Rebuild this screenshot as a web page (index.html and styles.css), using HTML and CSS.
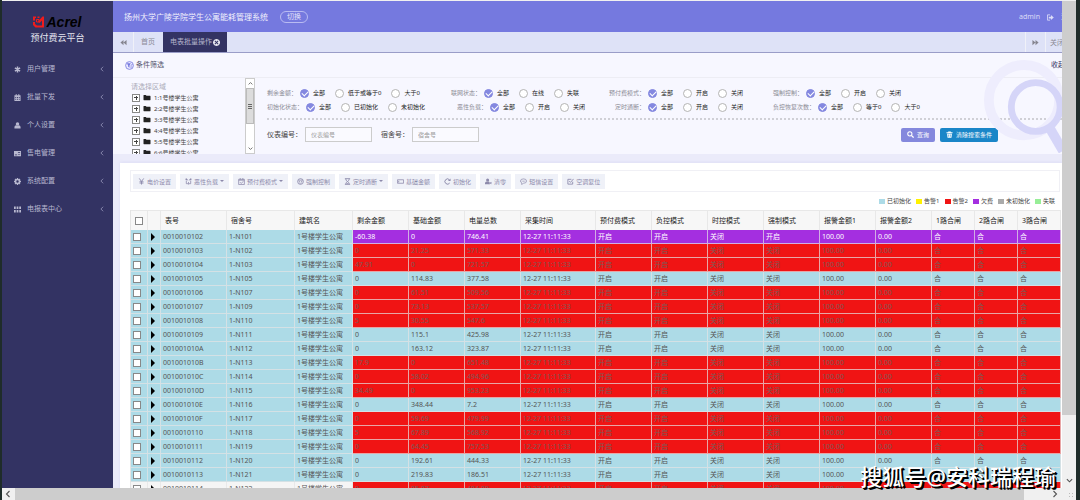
FILE: index.html
```html
<!DOCTYPE html>
<html lang="zh">
<head>
  <meta charset="UTF-8">
  <meta name="viewport" content="width=device-width, initial-scale=1.0">
  <title>预付费云平台</title>
  <link rel="stylesheet" href="styles.css">
</head>
<body>
  <!-- 图标 -->
  <svg class="sprite" aria-hidden="true">
    <symbol id="i-asterisk" viewBox="0 0 16 16"><path d="M8 1v14M2 4.5l12 7M14 4.5l-12 7" fill="none" stroke="currentColor" stroke-width="3.4"/></symbol>
    <symbol id="i-calendar" viewBox="0 0 16 16"><path d="M1 3h3V0h2v3h4V0h2v3h3v13H1zM3 7v2h2V7zm4 0v2h2V7zm4 0v2h2V7zM3 11v2h2v-2zm4 0v2h2v-2zm4 0v2h2v-2z" fill="currentColor" fill-rule="evenodd"/></symbol>
    <symbol id="i-user" viewBox="0 0 16 16"><circle cx="8" cy="4.5" r="4" fill="currentColor"/><path d="M1 15v-3c0-3 2-4 4-4.500c2 1.500 4 1.500 6 0c2 .5 4 1.500 4 4.500v3z" fill="currentColor"/></symbol>
    <symbol id="i-card" viewBox="0 0 16 16"><path d="M0 2h16v12H0zM9 5v2h5V5zm0 4v1.500h5V9zM2 10v2h5v-2z" fill="currentColor" fill-rule="evenodd"/></symbol>
    <symbol id="i-gear" viewBox="0 0 16 16"><circle cx="8" cy="8" r="4.500" fill="none" stroke="currentColor" stroke-width="3.500"/><path d="M8 0v3M8 13v3M0 8h3M13 8h3M2.300 2.300l2 2M11.700 11.700l2 2M2.300 13.700l2-2M11.700 4.300l2-2" stroke="currentColor" stroke-width="3"/></symbol>
    <symbol id="i-grid" viewBox="0 0 16 16"><path d="M0 1h4v6H0zM6 1h4v6H6zM12 1h4v6h-4zM0 9h4v6H0zM6 9h4v6H6zM12 9h4v6h-4z" fill="currentColor"/></symbol>
    <symbol id="i-left" viewBox="0 0 16 16"><path d="M11 2L5 8l6 6" fill="none" stroke="currentColor" stroke-width="2.200"/></symbol>
    <symbol id="i-right" viewBox="0 0 16 16"><path d="M5 2l6 6-6 6" fill="none" stroke="currentColor" stroke-width="2.200"/></symbol>
    <symbol id="i-up" viewBox="0 0 16 16"><path d="M2 11l6-6 6 6" fill="none" stroke="currentColor" stroke-width="2.600"/></symbol>
    <symbol id="i-down" viewBox="0 0 16 16"><path d="M2 5l6 6 6-6" fill="none" stroke="currentColor" stroke-width="2.600"/></symbol>
    <symbol id="i-backward" viewBox="0 0 16 16"><path d="M8 2v12L1 8zM15 2v12L8 8z" fill="currentColor"/></symbol>
    <symbol id="i-forward" viewBox="0 0 16 16"><path d="M1 2v12l7-6zM8 2v12l7-6z" fill="currentColor"/></symbol>
    <symbol id="i-close" viewBox="0 0 16 16"><path d="M8 0a8 8 0 1 0 .1 0zM5 3.500l3 3 3-3L12.500 5l-3 3 3 3-1.500 1.500-3-3-3 3L3.500 11l3-3-3-3z" fill="currentColor" fill-rule="evenodd"/></symbol>
    <symbol id="i-logout" viewBox="0 0 16 16"><path d="M7 2H1v12h6" fill="none" stroke="currentColor" stroke-width="2"/><path d="M4 6h5V2.500L15.500 8 9 13.500V10H4z" fill="currentColor"/></symbol>
    <symbol id="i-filter" viewBox="0 0 20 20"><circle cx="10" cy="10" r="8.700" fill="#ecebff" stroke="currentColor" stroke-width="1.800"/><path d="M4 5h9l-3 5v5l-3-2v-3z" fill="currentColor"/><path d="M12 11h4M12 14h3M14 8h3" stroke="currentColor" stroke-width="1.500"/></symbol>
    <symbol id="i-folder" viewBox="0 0 16 16"><path d="M0 3q0-1 1-1h4l2 2h8q1 0 1 1v8q0 1-1 1H1q-1 0-1-1z" fill="currentColor"/></symbol>
    <symbol id="i-search" viewBox="0 0 16 16"><circle cx="6.500" cy="6.500" r="4.800" fill="none" stroke="currentColor" stroke-width="2.400"/><path d="M10 10l5 5" stroke="currentColor" stroke-width="3"/></symbol>
    <symbol id="i-trash" viewBox="0 0 16 16"><path d="M1 3h4V1h6v2h4v2H1zM2.500 6h11l-1 9.500h-9z" fill="currentColor"/><path d="M6 8v5M10 8v5" stroke="#1a86c8" stroke-width="1.300"/></symbol>
    <symbol id="i-yen" viewBox="0 0 16 16"><path d="M3 1l5 7 5-7M8 8v7M3.500 8.500h9M3.500 11.500h9" fill="none" stroke="currentColor" stroke-width="2"/></symbol>
    <symbol id="i-branch" viewBox="0 0 16 16"><path d="M2 2l5 3M14 2l-5 3M3 6v7h4M13 6v7H9M8 9v6" fill="none" stroke="currentColor" stroke-width="1.800"/><circle cx="3" cy="3" r="2" fill="currentColor"/><circle cx="13" cy="3" r="2" fill="currentColor"/></symbol>
    <symbol id="i-plan" viewBox="0 0 16 16"><path d="M1.500 3h13v12h-13zM1.500 5h13M5 0v4M11 0v4M4.500 9.500l3 3 4.500-5" fill="none" stroke="currentColor" stroke-width="1.800"/></symbol>
    <symbol id="i-force" viewBox="0 0 16 16"><circle cx="8" cy="8" r="6.500" fill="none" stroke="currentColor" stroke-width="2"/><path d="M3 5h10M4 8h3M9 8h3M5 11q3 2 6 0" fill="none" stroke="currentColor" stroke-width="1.600"/></symbol>
    <symbol id="i-hourglass" viewBox="0 0 16 16"><path d="M2 1.500h12M2 14.500h12M4 2q0 4 4 6q4-2 4-6M4 14q0-4 4-6q4 2 4 6" fill="none" stroke="currentColor" stroke-width="2"/><path d="M5 13l3-2 3 2z" fill="currentColor"/></symbol>
    <symbol id="i-money" viewBox="0 0 16 16"><path d="M1 4h14v8H1z" fill="none" stroke="currentColor" stroke-width="1.800"/><path d="M3 6h2v4H3z" fill="currentColor"/></symbol>
    <symbol id="i-refresh" viewBox="0 0 16 16"><path d="M13 11.500A6 6 0 1 1 12.500 4" fill="none" stroke="currentColor" stroke-width="2.200"/><path d="M15 1v6H9z" fill="currentColor"/></symbol>
    <symbol id="i-user-x" viewBox="0 0 16 16"><circle cx="6" cy="4.500" r="3.500" fill="currentColor"/><path d="M0 14v-2q0-4 4-4h5l2 6z" fill="currentColor"/><path d="M10 9l5 5M15 9l-5 5" stroke="currentColor" stroke-width="2"/></symbol>
    <symbol id="i-chat" viewBox="0 0 16 16"><path d="M3.500 14.500l1-3Q1 10 1 7q0-5 7-5t7 5q0 5-7 5q-2 2-4.500 2.500z" fill="none" stroke="currentColor" stroke-width="1.600"/><path d="M4 6h2v2H4zM7 6h2v2H7zM10 6h2v2h-2z" fill="currentColor"/></symbol>
    <symbol id="i-check" viewBox="0 0 16 16"><path d="M13 8.500V14H2V3h8M5 7l3 3 7-8" fill="none" stroke="currentColor" stroke-width="2"/></symbol>
  </svg>

  <div class="screen">
    <div class="app">
      <aside class="sidebar">
        <div class="logo">
          <svg viewBox="0 0 22 24" aria-hidden="true">
            <path d="M0 1h6v3H4v5H0zM9 1h4v3H9zM22 1v22H5L0 18v-6h4v4l4 3h10V9l-5 5-3-3 9-10z" fill="#f01c1c"/>
            <path d="M7 7h5v5H7z" fill="none" stroke="#f01c1c" stroke-width="2"/>
          </svg>
          <span>Acrel</span>
        </div>
        <div class="platform">预付费云平台</div>
        <nav class="menu">
          <a href="#"><svg><use href="#i-asterisk"/></svg><span>用户管理</span><svg class="arrow"><use href="#i-left"/></svg></a>
          <a href="#"><svg><use href="#i-calendar"/></svg><span>批量下发</span><svg class="arrow"><use href="#i-left"/></svg></a>
          <a href="#"><svg><use href="#i-user"/></svg><span>个人设置</span><svg class="arrow"><use href="#i-left"/></svg></a>
          <a href="#"><svg><use href="#i-card"/></svg><span>售电管理</span><svg class="arrow"><use href="#i-left"/></svg></a>
          <a href="#"><svg><use href="#i-gear"/></svg><span>系统配置</span><svg class="arrow"><use href="#i-left"/></svg></a>
          <a href="#"><svg><use href="#i-grid"/></svg><span>电报表中心</span><svg class="arrow"><use href="#i-left"/></svg></a>
        </nav>
      </aside>

      <div class="main">
        <div class="page">
          <header class="topbar">
            <h1>扬州大学广陵学院学生公寓能耗管理系统</h1>
            <button type="button" class="switch">切换</button>
            <div class="account">
              <span>admin</span>
              <svg><use href="#i-logout"/></svg>
              <a href="#">退出</a>
            </div>
          </header>

          <div class="tabs">
            <button type="button" class="tab-nav" aria-label="向左"><svg><use href="#i-backward"/></svg></button>
            <a href="#" class="tab">首页</a>
            <a href="#" class="tab active">电表批量操作<svg><use href="#i-close"/></svg></a>
            <button type="button" class="tab-nav last" aria-label="向右"><svg><use href="#i-forward"/></svg></button>
            <button type="button" class="tab-ops">关闭操作</button>
          </div>

          <section class="filter">
            <div class="filter-title">
              <svg><use href="#i-filter"/></svg>
              <h2>条件筛选</h2>
              <a href="#">收起</a>
            </div>
            <div class="filter-body">
              <div class="tree">
                <div class="tree-list">
                  <p>请选择区域</p>
                  <ul>
                    <li><i></i><svg><use href="#i-folder"/></svg>1:1号楼学生公寓</li>
                    <li><i></i><svg><use href="#i-folder"/></svg>2:2号楼学生公寓</li>
                    <li><i></i><svg><use href="#i-folder"/></svg>3:3号楼学生公寓</li>
                    <li><i></i><svg><use href="#i-folder"/></svg>4:4号楼学生公寓</li>
                    <li><i></i><svg><use href="#i-folder"/></svg>5:5号楼学生公寓</li>
                    <li><i></i><svg><use href="#i-folder"/></svg>6:6号楼学生公寓</li>
                  </ul>
                </div>
                <div class="tree-scroll">
                  <svg><use href="#i-up"/></svg>
                  <div class="thumb"></div>
                  <svg><use href="#i-down"/></svg>
                </div>
              </div>

              <form class="conditions">
                <div class="radio-row">
                  <div class="group" role="radiogroup" aria-label="剩余金额"><b>剩余金额：</b>
                    <label><input type="radio" name="balance" checked>全部</label><label><input type="radio" name="balance">低于或等于0</label><label><input type="radio" name="balance">大于0</label></div>
                  <div class="group" role="radiogroup" aria-label="联网状态"><b>联网状态：</b>
                    <label><input type="radio" name="online" checked>全部</label><label><input type="radio" name="online">在线</label><label><input type="radio" name="online">失联</label></div>
                  <div class="group" role="radiogroup" aria-label="预付费模式"><b>预付费模式：</b>
                    <label><input type="radio" name="prepay" checked>全部</label><label><input type="radio" name="prepay">开启</label><label><input type="radio" name="prepay">关闭</label></div>
                  <div class="group" role="radiogroup" aria-label="强制控制"><b>强制控制：</b>
                    <label><input type="radio" name="force" checked>全部</label><label><input type="radio" name="force">开启</label><label><input type="radio" name="force">关闭</label></div>
                </div>
                <div class="radio-row second">
                  <div class="group" role="radiogroup" aria-label="初始化状态"><b>初始化状态：</b>
                    <label><input type="radio" name="init" checked>全部</label><label><input type="radio" name="init">已初始化</label><label><input type="radio" name="init">未初始化</label></div>
                  <div class="group" role="radiogroup" aria-label="恶性负载"><b>恶性负载：</b>
                    <label><input type="radio" name="load" checked>全部</label><label><input type="radio" name="load">开启</label><label><input type="radio" name="load">关闭</label></div>
                  <div class="group" role="radiogroup" aria-label="定时通断"><b>定时通断：</b>
                    <label><input type="radio" name="timer" checked>全部</label><label><input type="radio" name="timer">开启</label><label><input type="radio" name="timer">关闭</label></div>
                  <div class="group" role="radiogroup" aria-label="负控恢复次数"><b>负控恢复次数：</b>
                    <label><input type="radio" name="recover" checked>全部</label><label><input type="radio" name="recover">等于0</label><label><input type="radio" name="recover">大于0</label></div>
                </div>
                <div class="fields">
                  <label for="meter">仪表编号：</label>
                  <input type="text" id="meter" placeholder="仪表编号">
                  <label for="room">宿舍号：</label>
                  <input type="text" id="room" placeholder="宿舍号">
                  <div class="actions">
                    <button type="button" class="query"><svg><use href="#i-search"/></svg>查询</button>
                    <button type="button" class="clear"><svg><use href="#i-trash"/></svg>清除搜索条件</button>
                  </div>
                </div>
              </form>
            </div>
            <svg class="magnifier" viewBox="0 0 84 96" aria-hidden="true">
              <circle cx="42" cy="42" r="36" fill="none" stroke="#eeedfd" stroke-width="10"/>
              <path d="M68 70l14 24" stroke="#d5d5f8" stroke-width="10"/>
              <circle cx="54" cy="49" r="25" fill="none" stroke="#d5d5f8" stroke-width="7"/>
            </svg>
          </section>

          <section class="panel">
            <div class="toolbar">
              <button type="button"><svg><use href="#i-yen"/></svg>电价设置</button>
              <button type="button" class="drop"><svg><use href="#i-branch"/></svg>恶性负载</button>
              <button type="button" class="drop"><svg><use href="#i-plan"/></svg>预付费模式</button>
              <button type="button"><svg><use href="#i-force"/></svg>强制控制</button>
              <button type="button" class="drop"><svg><use href="#i-hourglass"/></svg>定时通断</button>
              <button type="button"><svg><use href="#i-money"/></svg>基础金额</button>
              <button type="button"><svg><use href="#i-refresh"/></svg>初始化</button>
              <button type="button"><svg><use href="#i-user-x"/></svg>清零</button>
              <button type="button"><svg><use href="#i-chat"/></svg>短信设置</button>
              <button type="button"><svg><use href="#i-check"/></svg>空调复位</button>
            </div>
            <ul class="legend">
              <li class="inited">已初始化</li>
              <li class="warn1">告警1</li>
              <li class="warn2">告警2</li>
              <li class="arrears">欠费</li>
              <li class="uninit">未初始化</li>
              <li class="lost">失联</li>
            </ul>
            <table class="meters">
              <colgroup>
                <col class="w-check"><col class="w-arrow"><col class="w-id"><col class="w-room"><col class="w-building">
                <col class="w-std"><col class="w-std"><col class="w-std"><col class="w-time"><col class="w-std"><col class="w-std"><col class="w-std"><col class="w-std"><col class="w-std"><col class="w-std">
                <col class="w-gate"><col class="w-gate"><col class="w-gate">
              </colgroup>
              <thead>
                <tr>
                  <th><input type="checkbox" aria-label="全选"></th><th></th><th>表号</th><th>宿舍号</th><th>建筑名</th>
                  <th>剩余金额</th><th>基础金额</th><th>电量总数</th><th>采集时间</th><th>预付费模式</th><th>负控模式</th>
                  <th>时控模式</th><th>强制模式</th><th>报警金额1</th><th>报警金额2</th><th>1路合闸</th><th>2路合闸</th><th>3路合闸</th>
                </tr>
              </thead>
              <tbody id="meterRows"></tbody>
            </table>
          </section>
        </div>
      </div>
    </div>

    <div class="vscroll"><div class="thumb"></div><svg><use href="#i-down"/></svg></div>
    <div class="hscroll">
      <svg><use href="#i-left"/></svg>
      <div class="thumb"></div>
      <div class="track"><svg><use href="#i-right"/></svg></div>
    </div>
    <div class="corner"></div>
  </div>

  <div class="watermark">搜狐号@安科瑞程瑜</div>

  <script>
    // 表号, 宿舍号, 剩余金额, 基础金额, 电量总数, 状态
    const meters = [
      ['0010010102', '1-N101', '-60.38', '0', '746.41', 'arrears'],
      ['0010010103', '1-N102', '0', '21.25', '571.33', 'warn'],
      ['0010010104', '1-N103', '47.91', '0', '721.57', 'warn'],
      ['0010010105', '1-N105', '0', '114.83', '377.58', ''],
      ['0010010106', '1-N107', '0', '61.51', '509.56', 'warn'],
      ['0010010107', '1-N109', '0', '73.13', '537.57', 'warn'],
      ['0010010108', '1-N110', '5', '30.55', '547.6', 'warn'],
      ['0010010109', '1-N111', '0', '115.1', '425.98', ''],
      ['001001010A', '1-N112', '0', '163.12', '323.87', ''],
      ['001001010B', '1-N113', '17.9', '0', '651.48', 'warn'],
      ['001001010C', '1-N114', '0', '58.02', '494.96', 'warn'],
      ['001001010D', '1-N115', '34.49', '0', '953.23', 'warn'],
      ['001001010E', '1-N116', '0', '348.44', '7.2', ''],
      ['001001010F', '1-N117', '0', '59.69', '479.99', 'warn'],
      ['0010010110', '1-N118', '5', '67.89', '568.92', 'warn'],
      ['0010010111', '1-N119', '0', '64.45', '757.53', 'warn'],
      ['0010010112', '1-N120', '0', '192.61', '444.33', ''],
      ['0010010113', '1-N121', '0', '219.83', '186.51', ''],
      ['0010010114', '1-N122', '0', '85.87', '484.88', 'warn hover']
    ];

    const rows = meters.map(([id, room, balance, base, total, state]) => {
      const force = state === 'arrears' ? '开启' : '关闭';
      const values = [balance, base, total, '12-27 11:11:33', '开启', '开启', '关闭', force, '100.00', '0.00', '合', '合', '合'];
      return `<tr class="${state}">
        <td><input type="checkbox" aria-label="${id}"></td><td><span class="expand"></span></td>
        <td>${id}</td><td>${room}</td><td>1号楼学生公寓</td>
        ${values.map(v => `<td class="val">${v}</td>`).join('')}
      </tr>`;
    });
    document.getElementById('meterRows').innerHTML = rows.join('');
  </script>
</body>
</html>
```
FILE: styles.css
```css
* {
  box-sizing: border-box;
}

body {
  margin: 0;
  font-family: 'Noto Sans', 'Noto Sans CJK SC', sans-serif;
  font-size: 7px;
  line-height: 10px;
  color: #444;
  background: #1f2c2a;
}

h1, h2, p, ul {
  margin: 0;
  padding: 0;
  font-weight: normal;
  list-style: none;
}

a {
  color: inherit;
  text-decoration: none;
}

button, input {
  font-family: inherit;
  margin: 0;
}

button {
  border: none;
  padding: 0;
  background: none;
  white-space: nowrap;
  cursor: pointer;
}

svg {
  width: 7px;
  height: 7px;
  flex: none;
}

.sprite {
  position: absolute;
  width: 0;
  height: 0;
}

.screen {
  display: grid;
  grid-template-columns: minmax(0, 1fr) 14px;
  grid-template-rows: minmax(0, 1fr) 12px;
  height: 100vh;
  margin: 0 4px 0 2px;
  border-top: 1px solid #f0f0f0;
}

.app {
  display: flex;
  overflow: hidden;
}

/* 侧边栏 */
.sidebar {
  width: 111px;
  flex: none;
  background: #333363;
  color: #b8b8d0;
}

.logo {
  display: flex;
  align-items: center;
  justify-content: center;
  gap: 2px;
  padding-top: 13px;
  color: #000;
  font: italic bold 14px/16px 'Liberation Sans', sans-serif;
}

.logo svg {
  width: 11px;
  height: 12px;
}

.platform {
  text-align: center;
  font-size: 9px;
  line-height: 16px;
  color: #e4e4ee;
}

.menu {
  padding-top: 9px;
}

.menu a {
  display: flex;
  align-items: center;
  height: 28px;
  gap: 6px;
  padding: 0 8px 0 12px;
}

.menu .arrow {
  width: 6px;
  height: 6px;
  margin-left: auto;
  color: #9494b8;
}

/* 主区域 */
.main {
  flex: 1;
  min-width: 0;
  overflow: hidden;
  background: #ebebfa;
}

.page {
  width: calc(100% + 20px);
}

.topbar {
  display: flex;
  align-items: center;
  height: 31px;
  padding: 1px 7px 0 11px;
  background: #7579df;
  color: #f0f0fc;
}

.topbar h1 {
  font-size: 8px;
}

.switch {
  width: 28px;
  height: 12px;
  margin-left: 12px;
  border: 1px solid #b9bbf2;
  border-radius: 6px;
  color: #e4e4fa;
  font-size: 7px;
  line-height: 10px;
}

.account {
  display: flex;
  align-items: center;
  gap: 7px;
  margin-left: auto;
  color: #dcdcf8;
}

.tabs {
  display: flex;
  height: 21px;
  background: #dee2f7;
  border-bottom: 1px solid #9a9dc8;
  color: #8a8a94;
}

.tab-nav {
  width: 21px;
  border-right: 1px solid #f0f1f8;
  color: #85858f;
  line-height: 7px;
}

.tab-nav.last {
  margin-left: auto;
  border-left: 1px solid #f0f1f8;
}

.tab {
  display: flex;
  align-items: center;
  gap: 1px;
  padding: 0 8px 0 7px;
}

.tab.active {
  padding: 0 7px;
  background: #333363;
  color: #b4b4cc;
}

.tab.active svg {
  color: #e8e8f0;
}

.tab-ops {
  width: 36px;
  font-size: 7px;
  color: #8a8a94;
}

/* 条件筛选 */
.filter {
  position: relative;
  background: #f7f7ff;
}

.filter-title {
  display: flex;
  align-items: center;
  gap: 2px;
  height: 25px;
  padding: 0 17px 0 12px;
  border-bottom: 1px solid #ededf4;
}

.filter-title svg {
  width: 9px;
  height: 9px;
  color: #7579df;
}

.filter-title h2 {
  font-size: 7px;
  color: #55556c;
}

.filter-title a {
  margin-left: auto;
  color: #333363;
}

.filter-body {
  display: flex;
  height: 76px;
}

.tree {
  display: flex;
  width: 142px;
  flex: none;
  padding-left: 18px;
}

.tree-list {
  flex: 1;
  overflow: hidden;
  padding-top: 4px;
}

.tree-list p {
  color: #aaaab8;
}

.tree li {
  display: flex;
  align-items: center;
  height: 11px;
  gap: 3px;
  padding-left: 1px;
  font-size: 6px;
  color: #444;
}

.tree li i {
  width: 8px;
  height: 8px;
  border: 1px solid #888;
  background:
    linear-gradient(#444, #444) center / 4px 1px no-repeat,
    linear-gradient(#444, #444) center / 1px 4px no-repeat,
    #fff;
}

.tree li svg {
  width: 8px;
  color: #222;
}

.tree-scroll {
  display: flex;
  flex-direction: column;
  align-items: center;
  width: 10px;
  border: 1px solid #ccc;
  background: #fff;
  color: #555;
}

.tree-scroll svg {
  width: 5px;
  height: 5px;
  margin: 2px 0;
}

.tree-scroll .thumb {
  width: 100%;
  height: 36px;
  margin-bottom: auto;
  border: 1px solid #bbb;
  background:
    repeating-linear-gradient(#666 0 1px, transparent 1px 2px) center / 4px 5px no-repeat,
    #dcdcdc;
}

.conditions {
  flex: 1;
  min-width: 0;
  margin-left: 12px;
  padding-top: 8px;
}

.radio-row {
  display: grid;
  grid-template-columns: 184px 158px 164px 1fr;
  height: 14px;
  font-size: 6px;
}

.radio-row.second {
  grid-template-columns: 190px 158px 158px 1fr;
}

.group {
  display: flex;
  align-items: center;
  white-space: nowrap;
}

.group b {
  margin-right: 3px;
  font-weight: normal;
  color: #8c8c96;
}

.group label {
  display: flex;
  align-items: center;
  gap: 4px;
  margin-right: 10px;
  color: #222;
}

.group input {
  appearance: none;
  width: 9px;
  height: 9px;
  border: 1px solid #b4b4b4;
  border-radius: 50%;
  background: #fff;
}

.group input:checked {
  position: relative;
  border-color: #8488e0;
  background: #8488e0;
}

.group input:checked::after {
  content: '';
  position: absolute;
  left: 1px;
  top: 1px;
  width: 5px;
  height: 3px;
  border: solid #fff;
  border-width: 0 0 1px 1px;
  transform: rotate(-45deg);
}

.fields {
  display: flex;
  align-items: center;
  margin-top: 4px;
  padding: 7px 84px 0 0;
  border-top: 2px dotted #d0d0d6;
}

.fields input {
  width: 67px;
  height: 15px;
  margin: 0 9px 0 3px;
  padding: 0 5px;
  border: 1px solid #ccc;
  background: #fafaff;
  font-size: 6px;
}

.fields input::placeholder {
  color: #999;
}

.actions {
  display: flex;
  gap: 5px;
  margin-left: auto;
}

.actions button {
  display: flex;
  align-items: center;
  gap: 3px;
  height: 14px;
  padding: 0 6px;
  border-radius: 2px;
  background: #8488dd;
  color: #fff;
  font-size: 6px;
}

.actions .clear {
  background: #1a86c8;
}

.magnifier {
  position: absolute;
  right: 17px;
  top: 6px;
  width: 82px;
  height: 94px;
  pointer-events: none;
}

/* 表格面板 */
.panel {
  margin: 9px 20px 0 7px;
  padding: 7px 2px 0 10px;
  background: #fff;
  box-shadow: 0 -1px 3px #dedef5;
}

.toolbar {
  display: flex;
  align-items: center;
  gap: 4px;
  height: 22px;
  padding: 0 2px;
  border: 1px solid #f0f0f5;
}

.toolbar button {
  display: flex;
  align-items: center;
  gap: 2px;
  height: 15px;
  padding: 0 5px;
  background: #eff1f8;
  color: #8d8aab;
  font-size: 6px;
}

.toolbar .drop::after {
  content: '';
  border: 2px solid transparent;
  border-top-color: #8d8aab;
  border-bottom: none;
}

.legend {
  display: flex;
  justify-content: flex-end;
  align-items: center;
  gap: 5px;
  height: 18px;
  padding-right: 5px;
  font-size: 6px;
}

.legend li {
  display: flex;
  align-items: center;
  gap: 2px;
}

.legend li::before {
  content: '';
  width: 6px;
  height: 5px;
  background: #addbe7;
}

.legend .warn1::before {
  background: #fff200;
}

.legend .warn2::before {
  background: #f01414;
}

.legend .arrears::before {
  background: #a42fe0;
}

.legend .uninit::before {
  background: #aaa;
}

.legend .lost::before {
  background: #97ee97;
}

.meters {
  width: 100%;
  table-layout: fixed;
  border-spacing: 0;
  border-left: 1px solid #e4e4e4;
}

.w-check { width: 17px; }
.w-arrow { width: 13px; }
.w-id { width: 66px; }
.w-room { width: 68px; }
.w-building { width: 58px; }
.w-std { width: 56px; }
.w-time { width: 75px; }
.w-gate { width: 43px; }

.meters th {
  height: 20px;
  padding: 0 4px;
  border: solid #e8e8e8;
  border-width: 1px 1px 0 0;
  background: #f7f7f7;
  text-align: left;
  font-weight: normal;
  white-space: nowrap;
  color: #222;
}

.meters td {
  height: 14px;
  padding: 0 2px;
  border: solid rgba(228, 228, 228, 0.7);
  border-width: 0 1px 1px 0;
  background: #addbe7;
  line-height: 13px;
  white-space: nowrap;
  color: #555;
}

.meters .hover td {
  background: #f5f5f5;
}

.meters .warn .val {
  background: #f01414;
  color: #7a5c58;
}

.meters .arrears .val {
  background: #a42fe0;
  color: #fff;
}

.meters input {
  appearance: none;
  display: block;
  width: 8px;
  height: 8px;
  border: 1px solid #888;
  background: #fff;
}

.expand {
  display: block;
  width: 4px;
  height: 8px;
  margin-left: 1px;
  border: solid transparent;
  border-width: 4px 0 4px 4px;
  border-left-color: #000;
}

/* 窗口滚动条 */
.vscroll {
  display: flex;
  flex-direction: column;
  align-items: center;
  background: #f0f0f0;
  color: #555;
}

.vscroll .thumb {
  width: 100%;
  height: 85%;
  margin-bottom: auto;
  background: #cdcdcd;
}

.vscroll svg {
  margin-bottom: 4px;
}

.hscroll {
  display: flex;
  align-items: center;
  background: #f0f0f0;
  color: #555;
}

.hscroll svg {
  width: 8px;
  height: 8px;
  margin: 0 3px 0 2px;
}

.hscroll .thumb {
  flex: 1;
  height: 100%;
  background: #cdcdcd;
}

.hscroll .track {
  display: flex;
  justify-content: flex-end;
  width: 38px;
}

.corner {
  padding: 4px 2px 2px 6px;
  background: radial-gradient(#bbb 1px, transparent 1px) right bottom / 3px 3px content-box, #f0f0f0;
}

.watermark {
  position: absolute;
  right: 24px;
  bottom: 8px;
  font-size: 22px;
  font-weight: 500;
  line-height: 32px;
  color: #fff;
  text-shadow: 1px 1px 0 #000, 2px 2px 0 #000;
}
```
